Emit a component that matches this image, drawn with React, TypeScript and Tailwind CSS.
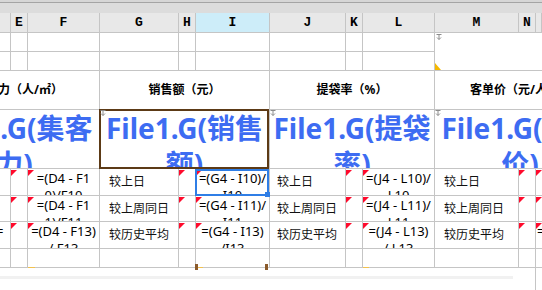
import clsx from "clsx";

const line = "border-r border-b border-[#c5c5c5]";

function Flag() {
    return (
        <svg className="absolute left-0 top-[1px]" width="6" height="6" viewBox="0 0 6 6">
            <polygon points="0,0 6,0 0,6" fill="#ff0a2c"/>
        </svg>
    );
}

function Pin({className}: { className?: string }) {
    return (
        <svg className={clsx("absolute", className)} width="6" height="6" viewBox="0 0 6 6" fill="none"
             stroke="#8c8c8c" strokeWidth="1">
            <path d="M0.5 0.5 H5.5 M3 1 V5.5 M1 3.5 L3 5.5 L5 3.5"/>
        </svg>
    );
}

function Head({label, active}: { label?: string, active?: boolean }) {
    return (
        <div className={clsx(line, "flex items-center justify-center font-['Liberation_Mono',monospace] text-[13px] font-bold text-black",
            active ? "bg-[#cdedf9]" : "bg-[#e8e8e8]")}>
            {label}
        </div>
    );
}

function Blank({flag}: { flag?: boolean }) {
    return <div className={clsx(line, "relative")}>{flag && <Flag/>}</div>;
}

function Formula({lines}: { lines: string[] }) {
    return (
        <div className={clsx(line, "relative overflow-hidden pt-[1px] text-center text-[13px] leading-[17px] text-black")}>
            <Flag/>
            {lines.map((l) => <div key={l} className="whitespace-nowrap">{l}</div>)}
        </div>
    );
}

function Label({text, pad}: { text: string, pad: string }) {
    return <div className={clsx(line, "flex items-center text-[12px] text-[#111]", pad)}>{text}</div>;
}

function Big({text, align}: { text: string, align: string }) {
    return (
        <div className={clsx(line, "col-span-3 flex overflow-hidden", align)}>
            <div className="w-[170px] shrink-0 text-center text-[28px] leading-[36px] font-bold text-[#3d6cf2]">
                {text}
            </div>
        </div>
    );
}

const rows = [
    {label: "较上日", f: ["=(D4 - F1", "0)/F10"], i: ["=(G4 - I10)/", "I10"], l: ["=(J4 - L10)/", "L10"]},
    {label: "较上周同日", f: ["=(D4 - F1", "1)/F11"], i: ["=(G4 - I11)/", "I11"], l: ["=(J4 - L11)/", "L11"]},
    {label: "较历史平均", f: ["=(D4 - F13)", "/ F13"], i: ["=(G4 - I13)", "/I13"], l: ["=(J4 - L13)", "/ L13"]},
];

export default function App() {
    return (
        <div className="relative w-[542px] h-[290px] overflow-hidden bg-white font-['Noto_Sans','Noto_Sans_CJK_SC',sans-serif]">
            <div className="h-[2px] bg-[#d6d6d6]"/>
            <div className="h-[1px] bg-[#a4a4a4]"/>
            <div className="h-[10px] bg-[#dcdcdc]"/>

            <div
                className="grid grid-cols-[11px_17px_72px_79px_17px_74px_76px_17px_72px_84px_17px_1fr] grid-rows-[20px_19px_19px_39px_59px_27px_26px_27px_19px]">
                <Head/><Head label="E"/><Head label="F"/><Head label="G"/><Head label="H"/>
                <Head label="I" active/><Head label="J"/><Head label="K"/><Head label="L"/>
                <Head label="M"/><Head label="N"/><Head/>

                {[0, 1, 2, 3, 4, 5, 6, 7, 8].map((c) => <Blank key={"a" + c}/>)}
                <div className="relative col-span-3 row-span-2 border-b border-[#c5c5c5]">
                    <Pin className="left-[1px] top-[1px]"/>
                    <svg className="absolute left-0 bottom-0" width="6" height="7" viewBox="0 0 6 7">
                        <polygon points="0,0 0,7 6,7" fill="#f5b800"/>
                    </svg>
                </div>
                {[0, 1, 2, 3, 4, 5, 6, 7, 8].map((c) => <Blank key={"b" + c}/>)}

                <div className={clsx(line, "col-span-3 flex items-center justify-end overflow-hidden pr-[36px] text-[12px] font-bold text-black")}>
                    <span className="shrink-0 whitespace-nowrap">集客力（人/㎡）</span>
                </div>
                <div className={clsx(line, "col-span-3 flex items-center justify-center text-[12px] font-bold text-black")}>
                    销售额（元）
                </div>
                <div className={clsx(line, "col-span-3 flex items-center justify-center text-[12px] font-bold text-black")}>
                    提袋率（%）
                </div>
                <div className="col-span-3 flex items-center overflow-hidden border-b border-[#c5c5c5] pl-[35px] text-[12px] font-bold text-black">
                    <span className="shrink-0 whitespace-nowrap">客单价（元/人）</span>
                </div>

                <Big text="File1.G(集客力)" align="justify-end"/>
                <Big text="File1.G(销售额)" align="justify-center"/>
                <Big text="File1.G(提袋率)" align="justify-center"/>
                <div className="col-span-3 flex overflow-hidden border-b border-[#c5c5c5]">
                    <div className="w-[170px] shrink-0 text-center text-[28px] leading-[36px] font-bold text-[#3d6cf2]">
                        File1.G(客单价)
                    </div>
                </div>

                {rows.map((r, idx) => (
                    <div key={r.label} className="contents">
                        <div className={clsx(line, "relative overflow-hidden text-[13px] leading-[17px] pt-[1px]")}>
                            {idx === 2 && <span className="absolute left-[-4px] top-[1px]">=</span>}
                        </div>
                        <Blank flag/>
                        <Formula lines={r.f}/>
                        <Label text={r.label} pad="pl-[9px]"/>
                        <Blank flag/>
                        <Formula lines={r.i}/>
                        <Label text={r.label} pad="pl-[7px]"/>
                        <Blank flag/>
                        <Formula lines={r.l}/>
                        <Label text={r.label} pad="pl-[9px]"/>
                        <Blank flag/>
                        <div className="relative overflow-hidden border-b border-[#c5c5c5] pt-[1px] text-[13px] leading-[17px]">
                            <Flag/>
                            {idx === 2 && <span className="whitespace-nowrap pl-[1px]">=(M4</span>}
                        </div>
                    </div>
                ))}

                {[0, 1, 2, 3, 4, 5, 6, 7, 8, 9, 10].map((c) => <Blank key={"z" + c}/>)}
                <div className="border-b border-[#c5c5c5]"/>
            </div>

            <div className="flex h-[22px]">
                <div className="w-[535px] pt-[8px]">
                    <div className="h-[3px] w-[513px] bg-[#f1f1f1]"/>
                </div>
                <div className="flex-1 border-l border-[#c5c5c5]"/>
            </div>

            {/* selection overlays */}
            <div className="absolute left-[99px] top-[109px] h-[60px] w-[170px] border-2 border-[#5c3a16]"/>
            <Pin className="left-[100px] top-[110px]"/>
            <Pin className="left-[270px] top-[110px]"/>
            <Pin className="left-[435px] top-[110px]"/>
            <div className="absolute left-[195px] top-[169px] h-[27px] w-[74px] border-2 border-[#2f7ee6]"/>
            <div className="absolute left-[265px] top-[192px] h-[5px] w-[5px] bg-[#2f7ee6]"/>
            <div className="absolute left-[195px] top-[264px] h-[6px] w-[3px] bg-[#8b5a2b]"/>
            <div className="absolute left-[265px] top-[264px] h-[6px] w-[3px] bg-[#8b5a2b]"/>
            <div className="absolute left-[198px] top-[267px] h-[1px] w-[5px] bg-[#f2c14e]"/>
            <div className="absolute left-[28px] top-[267px] h-[1px] w-[7px] bg-[#f2c14e]"/>
            <div className="absolute left-[363px] top-[267px] h-[1px] w-[6px] bg-[#f2c14e]"/>
        </div>
    );
}
